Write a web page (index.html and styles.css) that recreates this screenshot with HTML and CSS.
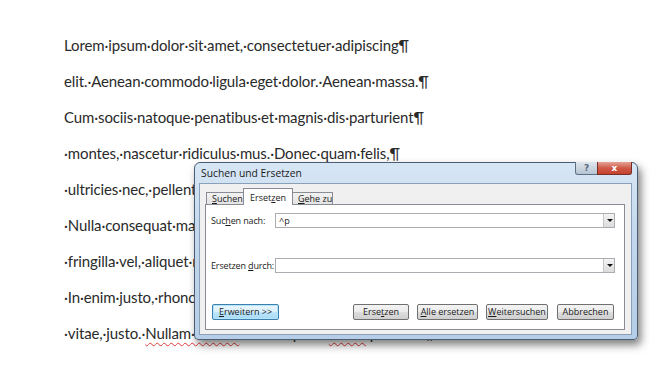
FILE: index.html
```html
<!DOCTYPE html>
<html lang="de">
<head>
  <meta charset="UTF-8" />
  <title>Suchen und Ersetzen</title>
  <link rel="stylesheet" href="styles.css">
</head>
<body>
  <div class="doc">
    <p>Lorem·ipsum·dolor·sit·amet,·consectetuer·adipiscing¶</p>
    <p>elit.·Aenean·commodo·ligula·eget·dolor.·Aenean·massa.¶</p>
    <p>Cum·sociis·natoque·penatibus·et·magnis·dis·parturient¶</p>
    <p>·montes,·nascetur·ridiculus·mus.·Donec·quam·felis,¶</p>
    <p>·ultricies·nec,·pellentesque·eu,·pretium·quis,·sem.¶</p>
    <p>·Nulla·consequat·massa·quis·enim.·Donec·pede·justo,¶</p>
    <p>·fringilla·vel,·aliquet·nec,·vulputate·eget,·arcu.¶</p>
    <p>·In·enim·justo,·rhoncus·ut,·imperdiet·a,·venenatis¶</p>
    <p>·vitae,·justo.·<span class="typo">Nullam·dictum</span>·felis·eu·pede·<span class="typo">mollis</span>·pretium.¶</p>
  </div>

  <div class="dialog">
    <div class="titlebar">
      <span class="title">Suchen und Ersetzen</span>
      <div class="caption">
        <span class="cap-btn help">?</span>
        <span class="cap-btn close">x</span>
      </div>
    </div>
    <div class="client">
      <div class="tabs">
        <span class="tab"><u>S</u>uchen</span>
        <span class="tab active">Erset<u>z</u>en</span>
        <span class="tab"><u>G</u>ehe zu</span>
      </div>
      <div class="panel">
        <div class="row">
          <label>Suc<u>h</u>en nach:</label>
          <div class="combo"><span class="value">^p</span><span class="arrow"></span></div>
        </div>
        <div class="row second">
          <label>Ersetzen <u>d</u>urch:</label>
          <div class="combo"><span class="value"></span><span class="arrow"></span></div>
        </div>
        <div class="buttons">
          <button class="btn focus w-more"><u>E</u>rweitern &gt;&gt;</button>
          <span class="spacer"></span>
          <button class="btn w-repl">Erse<u>t</u>zen</button>
          <button class="btn w-all"><u>A</u>lle ersetzen</button>
          <button class="btn w-next"><u>W</u>eitersuchen</button>
          <button class="btn w-cancel">Abbrechen</button>
        </div>
      </div>
    </div>
  </div>
</body>
</html>
```

FILE: styles.css
```css
body {
  margin: 0;
  background: #fff;
  font-family: Lato, 'Open Sans', sans-serif;
}
.doc {
  padding: 27px 0 0 64px;
  color: #2a2a2a;
  font-size: 15px;
  letter-spacing: -0.12px;
}
.doc p {
  margin: 0;
  line-height: 36px;
  white-space: nowrap;
}
.typo {
  text-decoration: underline wavy #e03a3a;
  text-decoration-thickness: 1px;
  text-underline-offset: 3px;
}

/* dialog window */
.dialog {
  position: absolute;
  left: 194px;
  top: 162px;
  width: 444px;
  height: 178px;
  box-sizing: border-box;
  border: 1px solid #4b5d70;
  border-radius: 6px 6px 4px 4px;
  background: linear-gradient(180deg, #d7e6f5 0%, #c3d8ee 40%, #b5cde6 100%);
  box-shadow: 3px 5px 8px rgba(0,0,0,0.5);
  padding: 0 5px 4px 4px;
  display: flex;
  flex-direction: column;
  font-family: 'Open Sans', sans-serif;
  font-size: 9px;
  color: #1a1a1a;
  white-space: nowrap;
}
.titlebar {
  height: 20px;
  display: flex;
  align-items: flex-start;
}
.title {
  margin: 3px 0 0 2px;
  font-size: 10.3px;
}
.caption {
  margin-left: auto;
  margin-top: -1px;
  display: flex;
}
.cap-btn {
  height: 13px;
  display: flex;
  align-items: center;
  justify-content: center;
  border: 1px solid #5d6f84;
  border-top: none;
  box-sizing: border-box;
  font-family: 'DejaVu Sans', sans-serif;
  font-weight: bold;
  font-size: 9px;
}
.help {
  width: 23px;
  border-radius: 0 0 0 3px;
  background: linear-gradient(180deg, #dfe6ee, #b7c4d3);
  color: #5a6a7c;
}
.close {
  width: 35px;
  margin-left: -1px;
  border-radius: 0 0 3px 0;
  background: linear-gradient(180deg, #e4a497 0%, #cf5a48 50%, #c4402e 100%);
  color: #fff;
  border-color: #7a2f26;
}
.client {
  flex: 1;
  border: 1px solid #8aa0b8;
  background: #f0f0f0;
  padding: 4px 6px 4px 5px;
  display: flex;
  flex-direction: column;
}
.tabs {
  height: 16px;
  margin-left: 1px;
  display: flex;
  align-items: flex-end;
  position: relative;
  z-index: 1;
}
.tab {
  height: 12px;
  box-sizing: border-box;
  border: 1px solid #898c95;
  border-bottom: none;
  background: linear-gradient(180deg, #f2f2f2, #e3e3e3);
  padding: 0 5px;
  line-height: 11px;
}
.tab + .tab {
  margin-left: -1px;
}
.tab:first-child {
  width: 38px;
}
.tab.active {
  height: 17px;
  width: 50px;
  margin-bottom: -1px;
  background: #fff;
  line-height: 17px;
  padding: 0 6px;
}
.tab:last-child {
  width: 41px;
}
.panel {
  flex: 1;
  background: #fff;
  border: 1px solid #898c95;
  padding: 8px 5px 9px 5px;
  display: flex;
  flex-direction: column;
}
.row {
  display: flex;
  align-items: center;
  height: 15px;
}
.row.second {
  margin-top: 30px;
}
.row label {
  width: 64px;
  flex-shrink: 0;
  letter-spacing: -0.15px;
}
.combo {
  flex: 1;
  height: 15px;
  margin-right: 4px;
  box-sizing: border-box;
  border: 1px solid #abadb3;
  display: flex;
  align-items: center;
}
.value {
  flex: 1;
  padding-left: 3px;
}
.arrow {
  width: 11px;
  height: 13px;
  box-sizing: border-box;
  border-left: 1px solid #c6c6c6;
  background: linear-gradient(180deg, #f4f4f4, #dcdcdc);
  position: relative;
}
.arrow::after {
  content: "";
  position: absolute;
  left: 3px;
  top: 5px;
  border-left: 3px solid transparent;
  border-right: 3px solid transparent;
  border-top: 3px solid #111;
}
.buttons {
  margin-top: auto;
  display: flex;
  gap: 8px;
  padding-left: 1px;
  padding-right: 5px;
}
.spacer {
  flex: 1;
}
.btn {
  height: 16px;
  padding: 0;
  border: 1px solid #707070;
  border-radius: 2px;
  background: linear-gradient(180deg, #f3f3f3 0%, #ebebeb 50%, #dddddd 51%, #cfcfcf 100%);
  font-family: 'Open Sans', sans-serif;
  font-size: 9px;
  color: #1a1a1a;
  line-height: 14px;
  white-space: nowrap;
}
.btn.focus {
  border-color: #3c7fb1;
  background: linear-gradient(180deg, #eaf6fd 0%, #d9f0fc 50%, #bee6fd 51%, #a7d9f5 100%);
  box-shadow: inset 0 0 0 1px #b6e4f8;
}
.w-more { width: 67px; }
.w-repl { width: 56px; }
.w-all { width: 61px; }
.w-next { width: 62px; }
.w-cancel { width: 57px; margin-left: 1px; }
```
